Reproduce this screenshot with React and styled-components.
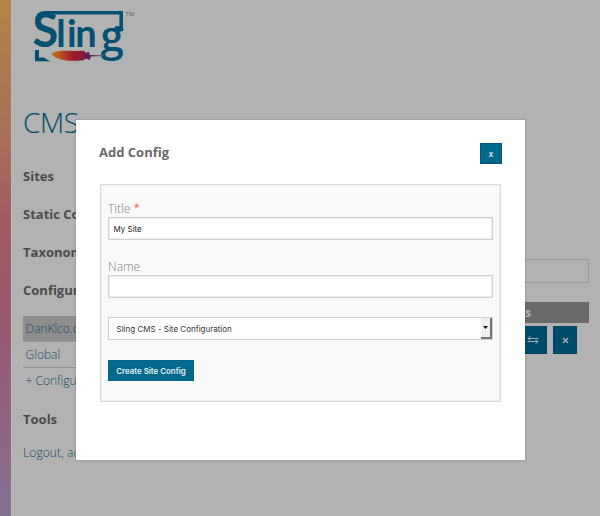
import React from "react";
import styled, { createGlobalStyle } from "styled-components";

const Global = createGlobalStyle`
  * { box-sizing: border-box; }
  html, body { margin: 0; background: #b2b2b2; }
  body { font-family: "Open Sans", sans-serif; overflow: hidden; }
  button, input, select { font: inherit; }
`;

const Page = styled.div`
  position: relative;
  display: flex;
  width: 600px;
  height: 516px;
  overflow: hidden;
  background: #b2b2b2;
`;

const Stripe = styled.div`
  flex: 0 0 12px;
  background: linear-gradient(180deg, #b18546 0%, #a7705a 26%, #a25b61 43%, #985b73 64%, #8d6788 86%, #83718f 100%);
  border-right: 1px solid #c0b5b7;
`;

const Content = styled.div`
  flex: 1;
  display: flex;
  flex-direction: column;
  padding: 0 11px;
`;

const Header = styled.header`
  height: 98px;
`;

const Logo = styled.svg`
  display: block;
  width: 120px;
  height: 70px;
`;

const PageTitle = styled.h1`
  margin: 0;
  height: 59px;
  font-size: 28px;
  line-height: 49px;
  font-weight: 300;
  letter-spacing: -0.4px;
  color: #004a66;
`;

const Columns = styled.div`
  display: flex;
  justify-content: space-between;
`;

const Sidebar = styled.nav`
  width: 120px;
  white-space: nowrap;
`;

const MenuHeading = styled.h2`
  margin: 0;
  font-size: 13px;
  line-height: 38px;
  font-weight: 700;
  color: #4b4b4b;
`;

const MenuList = styled.div`
  padding: 7px 0 6px;
`;

const MenuItem = styled.a`
  display: block;
  height: 26px;
  padding-left: 2.5px;
  border-bottom: 1px solid ${(p) => (p.$last ? "transparent" : "#949494")};
  background: ${(p) => (p.$active ? "#8e8e8e" : "transparent")};
  font-size: 12px;
  line-height: 26px;
  font-weight: 300;
  color: #184b60;
`;

const Logout = styled.a`
  display: block;
  font-size: 12px;
  line-height: 30px;
  font-weight: 300;
  letter-spacing: 0.1px;
  color: #184b60;
`;

const Results = styled.section`
  width: 120px;
  padding-top: 102px;
`;

const SearchBox = styled.div`
  height: 24px;
  border: 1px solid #989898;
  border-radius: 1px;
`;

const TableHead = styled.div`
  height: 21px;
  margin-top: 19px;
  padding-right: 58px;
  background: #6a6a6a;
  color: #b2b2b2;
  font-size: 12px;
  line-height: 21px;
  font-weight: 700;
  text-align: right;
`;

const Actions = styled.div`
  display: flex;
  justify-content: flex-end;
  gap: 6px;
  padding: 3px 12px 0 0;
`;

const ActionButton = styled.button`
  width: 24px;
  height: 28px;
  display: grid;
  place-items: center;
  padding: 0 ${(p) => (p.$wide ? 4 : 0)}px 0 0;
  border: 1px solid #004361;
  background: #004b67;
  color: #b2b2b2;
`;

const Modal = styled.div`
  position: absolute;
  left: 76px;
  top: 120px;
  width: 449px;
  height: 340px;
  padding: 23px 24px;
  background: #fff;
  box-shadow: 0 0 1px 1px rgba(0, 0, 0, 0.09);
`;

const ModalHeader = styled.div`
  display: flex;
  justify-content: space-between;
  align-items: flex-start;
  height: 41px;
`;

const ModalTitle = styled.h3`
  margin: 0 0 0 -1px;
  font-size: 13px;
  line-height: 19px;
  font-weight: 700;
  color: #696969;
`;

const CloseButton = styled.button`
  width: 22px;
  height: 21px;
  margin-right: -1px;
  padding: 0;
  border: 1px solid #00587f;
  background: #00698c;
  color: #e4eff3;
  font-size: 8px;
  line-height: 18px;
  font-weight: 600;
`;

const Form = styled.form`
  display: flex;
  flex-direction: column;
  align-items: stretch;
  height: 218px;
  padding: 17px 7px 0;
  border: 1px solid #dcdcdc;
  outline: 1px solid #efefef;
  outline-offset: -2px;
  background: #f9f9f9;
`;

const Label = styled.label`
  height: 15px;
  font-size: 12px;
  line-height: 14px;
  font-weight: 300;
  color: #808080;
`;

const Required = styled.span`
  color: #f33;
`;

const Input = styled.input`
  height: 23px;
  margin: 0 0 ${(p) => p.$gap}px;
  padding: 0 4.5px;
  border: 1px solid #cfcfcf;
  box-shadow: inset 0 0 0 0.5px #ddd;
  border-radius: 1px;
  outline: 0;
  background: #fff;
  font-family: Inter, sans-serif;
  font-size: 8px;
  color: #222;
`;

const Select = styled.div`
  display: flex;
  height: 23px;
  margin-bottom: 20px;
  padding-left: 7.5px;
  justify-content: space-between;
  border: 1px solid #cfcfcf;
  background: #fff;
  font-family: Inter, sans-serif;
  font-size: 8px;
  line-height: 22px;
  color: #333;
`;

const Arrow = styled.span`
  display: grid;
  place-items: center;
  width: 11px;
  border-right: 2px solid #747474;
  border-bottom: 2px solid #747474;
  background: #f0f0f0;
`;

const Submit = styled.button`
  align-self: flex-start;
  width: 86px;
  height: 21px;
  padding: 0;
  border: 1px solid #00658a;
  background: #00698c;
  color: #e9f2f5;
  font-family: Inter, sans-serif;
  font-size: 7.9px;
  font-weight: 600;
  white-space: nowrap;
`;

function SlingLogo() {
  return (
    <Logo viewBox="23 0 120 70" fill="#045072">
      <defs>
        <linearGradient id="feather" x1="50" x2="104" y1="0" y2="0" gradientUnits="userSpaceOnUse">
          <stop offset="0" stopColor="#bd7d1c" />
          <stop offset="0.2" stopColor="#b5501d" />
          <stop offset="0.42" stopColor="#a01c29" />
          <stop offset="0.6" stopColor="#861b38" />
          <stop offset="0.72" stopColor="#55205d" />
          <stop offset="1" stopColor="#70547b" />
        </linearGradient>
      </defs>
      <path d="M37 21C37 15.5 40 12.8 45 12.8H121.2V28H115" fill="none" stroke="#045072" strokeWidth="3.6" />
      <path d="M35 50H39V57.5H44C46 59.5 48.5 60.5 51.5 61.3H35Z" />
      <text y="46.5" fontFamily="Lato, sans-serif" fontSize="38" fontWeight="700">
        <tspan x="32.6" fontSize="47">S</tspan>
        <tspan x="56.2 67 75.2">lin</tspan>
        <tspan x="100.4" y="50.5" fontFamily="Open Sans, sans-serif" fontSize="42" fontWeight="600">g</tspan>
      </text>
      <path d="M51 54C56 49.6 65 50.8 73 51L84 50.8L86 53L88.5 51.5L90 55L104 55.3V55.9L91 56.5L89.5 60L86 58.5L83 60.2C71 61.3 58 61.3 51 54Z" fill="url(#feather)" />
      <text x="125.3" y="15.5" fontFamily="Liberation Sans, sans-serif" fontSize="6.2" fill="#666">TM</text>
    </Logo>
  );
}

export default function App() {
  return (
    <>
      <Global />
      <Page>
        <Stripe />
        <Content>
          <Header><SlingLogo /></Header>
          <PageTitle>CMS</PageTitle>
          <Columns>
            <Sidebar>
              <MenuHeading>Sites</MenuHeading>
              <MenuHeading>Static Content</MenuHeading>
              <MenuHeading>Taxonomy</MenuHeading>
              <MenuHeading>Configuration</MenuHeading>
              <MenuList>
                <MenuItem $active>DanKlco.com</MenuItem>
                <MenuItem>Global</MenuItem>
                <MenuItem $last>+ Configuration</MenuItem>
              </MenuList>
              <MenuHeading>Tools</MenuHeading>
              <Logout>Logout, admin</Logout>
            </Sidebar>
            <Results>
              <SearchBox />
              <TableHead>Actions</TableHead>
              <Actions>
                <ActionButton $wide>
                  <svg width="12" height="10" viewBox="0 0 12 10" fill="none" stroke="currentColor" strokeWidth="0.9">
                    <path d="M11.5 3.5H1M3.5 1L1 3.5L3.5 5M0.5 6.5H11M8.5 5L11 6.5L8.5 9" />
                  </svg>
                </ActionButton>
                <ActionButton>
                  <svg width="7" height="7" viewBox="0 0 7 7" fill="none" stroke="currentColor" strokeWidth="1.2">
                    <path d="M1 1L6 6M6 1L1 6" />
                  </svg>
                </ActionButton>
              </Actions>
            </Results>
          </Columns>
        </Content>
        <Modal role="dialog">
          <ModalHeader>
            <ModalTitle>Add Config</ModalTitle>
            <CloseButton>x</CloseButton>
          </ModalHeader>
          <Form>
            <Label>Title <Required>*</Required></Label>
            <Input $gap={20} defaultValue="My Site" />
            <Label>Name</Label>
            <Input $gap={19} />
            <Select>
              Sling CMS - Site Configuration
              <Arrow>
                <svg width="5" height="3" viewBox="0 0 5 3"><path d="M0 0H5L2.5 3Z" fill="#111" /></svg>
              </Arrow>
            </Select>
            <Submit type="button">Create Site Config</Submit>
          </Form>
        </Modal>
      </Page>
    </>
  );
}
